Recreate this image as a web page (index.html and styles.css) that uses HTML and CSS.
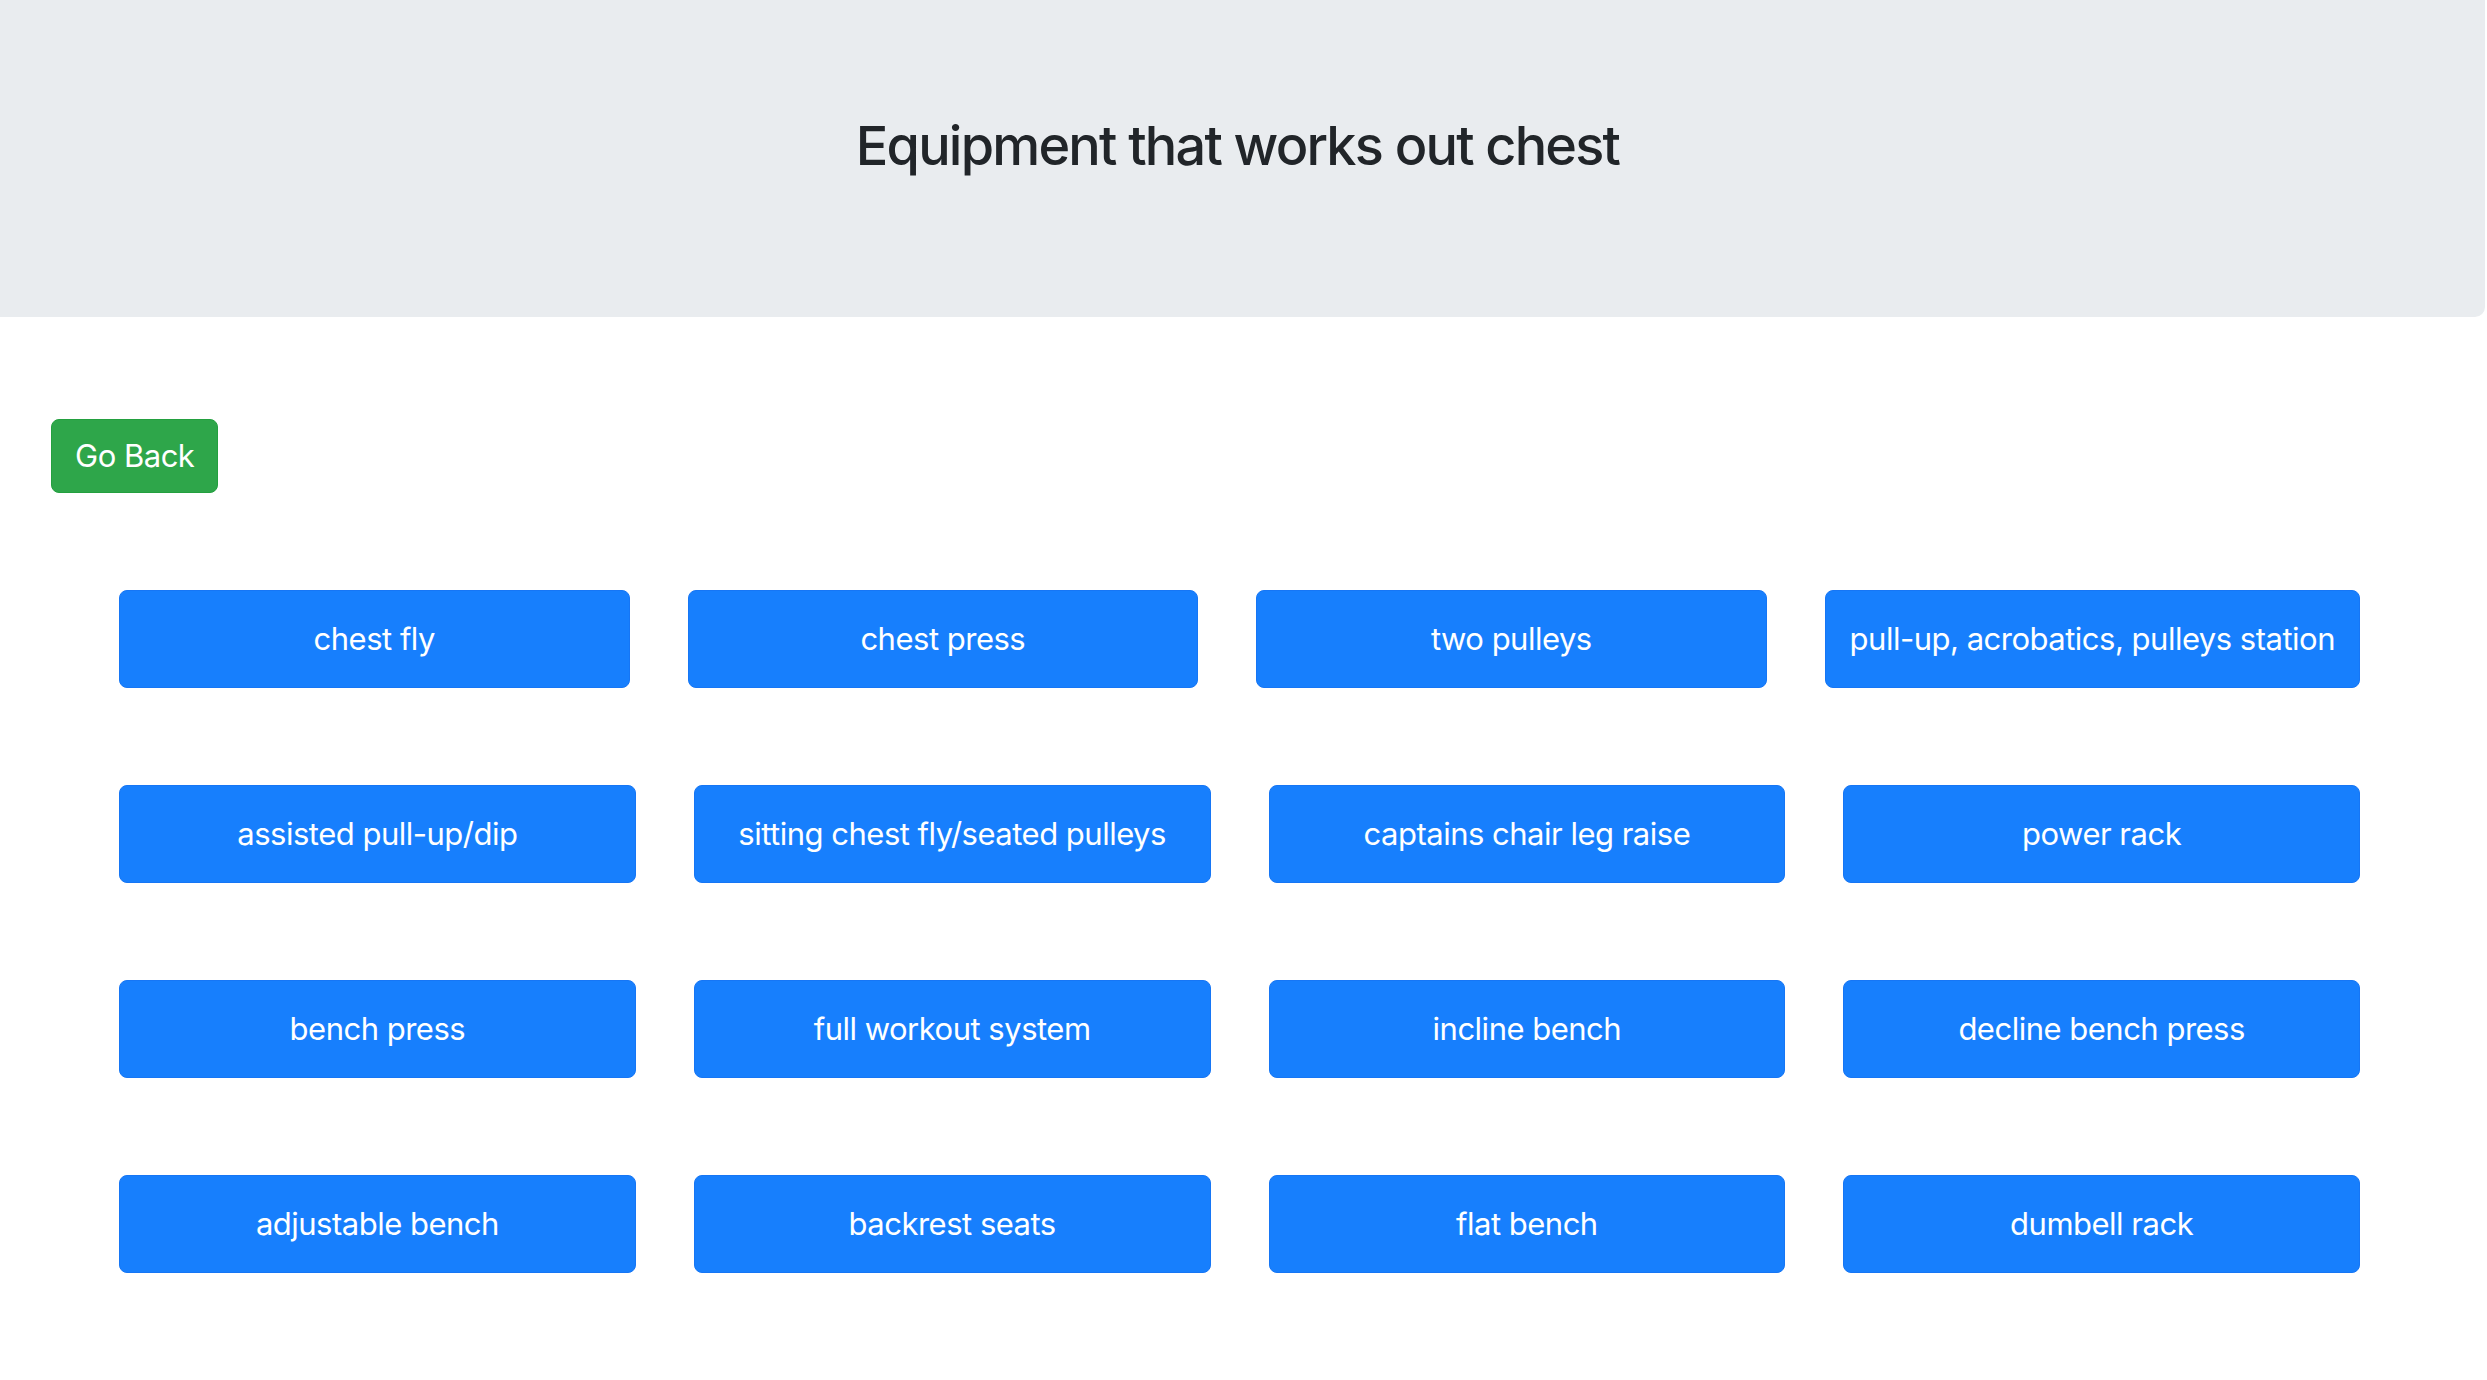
FILE: index.html
```html
<!DOCTYPE html>
<html lang="en">
<head>
<meta charset="utf-8">
<title>Equipment that works out chest</title>
<link rel="stylesheet" href="styles.css">
</head>
<body>
<header class="jumbotron">
  <h3 class="title">Equipment that works out chest</h3>
</header>
<main class="content">
  <div class="back-wrap"><button class="btn btn-back">Go Back</button></div>
  <div class="rows">
    <div class="row">
      <button class="btn btn-item">chest fly</button>
      <button class="btn btn-item">chest press</button>
      <button class="btn btn-item">two pulleys</button>
      <button class="btn btn-item">pull-up, acrobatics, pulleys station</button>
    </div>
    <div class="row">
      <button class="btn btn-item">assisted pull-up/dip</button>
      <button class="btn btn-item">sitting chest fly/seated pulleys</button>
      <button class="btn btn-item">captains chair leg raise</button>
      <button class="btn btn-item">power rack</button>
    </div>
    <div class="row">
      <button class="btn btn-item">bench press</button>
      <button class="btn btn-item">full workout system</button>
      <button class="btn btn-item">incline bench</button>
      <button class="btn btn-item">decline bench press</button>
    </div>
    <div class="row">
      <button class="btn btn-item">adjustable bench</button>
      <button class="btn btn-item">backrest seats</button>
      <button class="btn btn-item">flat bench</button>
      <button class="btn btn-item">dumbell rack</button>
    </div>
  </div>
</main>
</body>
</html>
```
FILE: styles.css
```css
html, body {
  margin: 0;
  padding: 0;
  background: #ffffff;
}
body {
  font-family: Inter, "Liberation Sans", sans-serif;
  color: #212529;
}
.jumbotron {
  box-sizing: border-box;
  width: calc(100% - 2px);
  height: 317px;
  background: #e9ecef;
  border-bottom-right-radius: 10px;
  padding: 114px 10px 0 0;
  text-align: center;
}
.title {
  margin: 0;
  font-size: 54px;
  font-weight: 500;
  line-height: 1.2;
  letter-spacing: -1.8px;
  color: #212529;
}
.content {
  padding: 102px 127px 0 51px;
}
.btn {
  font-family: Inter, "Liberation Sans", sans-serif;
  font-size: 31px;
  line-height: 46px;
  font-weight: 400;
  letter-spacing: -0.5px;
  color: #ffffff;
  border-radius: 8px;
  cursor: pointer;
  box-sizing: border-box;
  white-space: nowrap;
}
.btn-back {
  background: #2ea64a;
  border: 1px solid #23a03f;
  height: 74px;
  padding: 0 23px;
}
.rows {
  margin-top: 97px;
  margin-left: 68px;
  display: flex;
  flex-direction: column;
  gap: 97px;
}
.row {
  display: flex;
  gap: 58px;
}
.btn-item {
  flex: 1 1 0;
  min-width: max-content;
  height: 98px;
  padding: 0 24px;
  background: #177ffd;
  border: 1px solid #1676f5;
  text-align: center;
}
```
